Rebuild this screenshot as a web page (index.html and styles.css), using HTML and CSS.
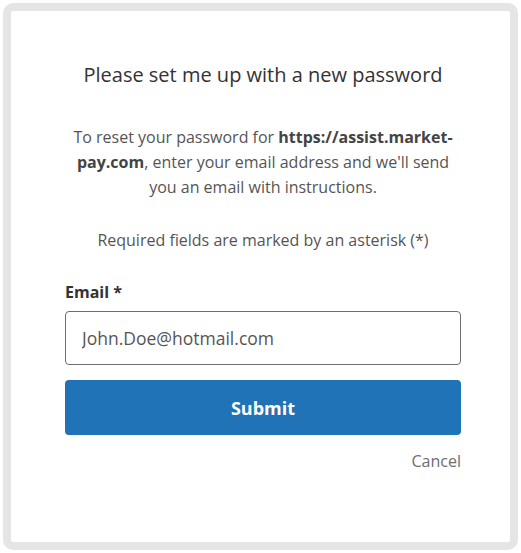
FILE: index.html
```html
<!DOCTYPE html>
<html lang="en">
<head>
    <meta charset="UTF-8">
    <meta name="viewport" content="width=device-width, initial-scale=1.0">
    <title>Reset password</title>
    <link rel="stylesheet" href="styles.css">
</head>
<body>
    <div class="card">
        <div class="content">
            <h1>Please set me up with a new password</h1>
            <p class="intro">To reset your password for <strong>https://assist.market-pay.com</strong>, enter your email address and we'll send you an email with instructions.</p>
            <p class="note">Required fields are marked by an asterisk (*)</p>
            <form class="reset-form">
                <label for="email">Email *</label>
                <input type="email" id="email" value="John.Doe@hotmail.com">
                <button type="submit">Submit</button>
                <a href="#" class="cancel">Cancel</a>
            </form>
        </div>
    </div>
</body>
</html>
```

FILE: styles.css
```css
html, body {
    height: 100%;
}

body {
    margin: 0;
    padding: 3px;
    box-sizing: border-box;
    font-family: "Open Sans", Arial, sans-serif;
    background-color: #fff;
    color: #555;
}

.card {
    height: 100%;
    box-sizing: border-box;
    border: 8px solid #e5e5e5;
    border-radius: 10px;
    background-color: #fff;
}

.content {
    padding: 44px 49px 0 54px;
}

h1 {
    margin: 0;
    text-align: center;
    font-size: 20px;
    font-weight: 400;
    color: #333;
    line-height: 40px;
}

.intro {
    margin: 30px 0 0;
    text-align: center;
    font-size: 16px;
    line-height: 25px;
}

.intro strong {
    color: #444;
}

.note {
    margin: 28px 0 0;
    text-align: center;
    font-size: 16px;
    line-height: 25px;
}

.reset-form {
    display: flex;
    flex-direction: column;
    margin-top: 28px;
}

.reset-form label {
    font-size: 16px;
    font-weight: 700;
    color: #333;
    line-height: 22px;
}

.reset-form input {
    margin-top: 8px;
    height: 54px;
    box-sizing: border-box;
    padding: 0 16px;
    font-family: inherit;
    font-size: 17.5px;
    color: #555;
    border: 1px solid #6b6e73;
    border-radius: 4px;
}

.reset-form button {
    margin-top: 15px;
    height: 55px;
    border: none;
    border-radius: 4px;
    background-color: #2073b7;
    color: #fff;
    font-family: inherit;
    font-size: 18px;
    font-weight: 700;
}

.cancel {
    align-self: flex-end;
    margin-top: 15px;
    font-size: 16px;
    color: #6b6e73;
    text-decoration: none;
}
```
